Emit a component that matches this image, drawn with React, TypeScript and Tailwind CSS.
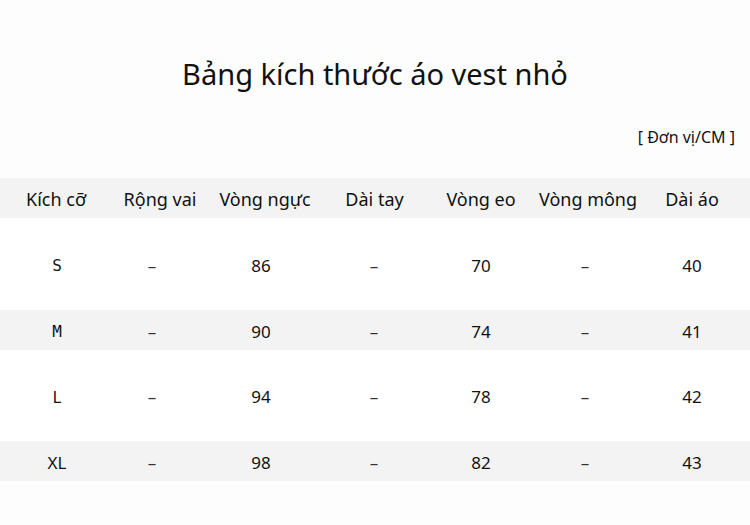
import React from "react";

const headers = [
  { t: "Kích cỡ", c: "pr-[2px]" },
  { t: "Rộng vai", c: "pr-[6px]" },
  { t: "Vòng ngực", c: "pr-[8px]" },
  { t: "Dài tay", c: "pr-[1px]" },
  { t: "Vòng eo", c: "" },
  { t: "Vòng mông", c: "pl-[2px]" },
  { t: "Dài áo", c: "pr-[2px]" },
];
const rows = [
  { size: "S", vals: ["86", "70", "40"], h: "h-[92px]", bg: "bg-white", mono: true },
  { size: "M", vals: ["90", "74", "41"], h: "h-[40px]", bg: "bg-[#f3f3f3]", mono: true },
  { size: "L", vals: ["94", "78", "42"], h: "h-[91px]", bg: "bg-white", mono: false },
  { size: "XL", vals: ["98", "82", "43"], h: "h-[40px]", bg: "bg-[#f3f3f3]", mono: false },
];

export default function App() {
  return (
    <div className="w-[750px] h-[525px] bg-[#fdfdfd] text-[#111111] overflow-hidden" style={{ fontFamily: '"Noto Sans", "Open Sans", sans-serif' }}>
      <div className="pt-[51px] h-[98px] text-center text-[29px] leading-[46px]">Bảng kích thước áo vest nhỏ</div>
      <div className="h-[80px] flex justify-end pr-[15px] pt-[27px] text-[16px] leading-[24px]">[ Đơn vị/CM ]</div>
      <div className="grid grid-cols-7 h-[40px] bg-[#f3f3f3] items-center px-[4px] text-[18px] pt-[2px]">
        {headers.map((h) => (
          <div key={h.t} className={`text-center ${h.c}`}>{h.t}</div>
        ))}
      </div>
      {rows.map((r) => (
        <div key={r.size} className={`grid grid-cols-7 items-center px-[4px] pt-[3px] text-[17px] ${r.h} ${r.bg}`}>
          <div className="text-center" style={r.mono ? { fontFamily: '"DejaVu Sans Mono", monospace', fontSize: 16 } : undefined}>{r.size}</div>
          <div className="text-center pr-[22px] text-[#333]">–</div>
          <div className="text-center pr-[16px]">{r.vals[0]}</div>
          <div className="text-center pr-[2px] text-[#333]">–</div>
          <div className="text-center">{r.vals[1]}</div>
          <div className="text-center pr-[4px] text-[#333]">–</div>
          <div className="text-center pr-[2px]">{r.vals[2]}</div>
        </div>
      ))}
    </div>
  );
}
